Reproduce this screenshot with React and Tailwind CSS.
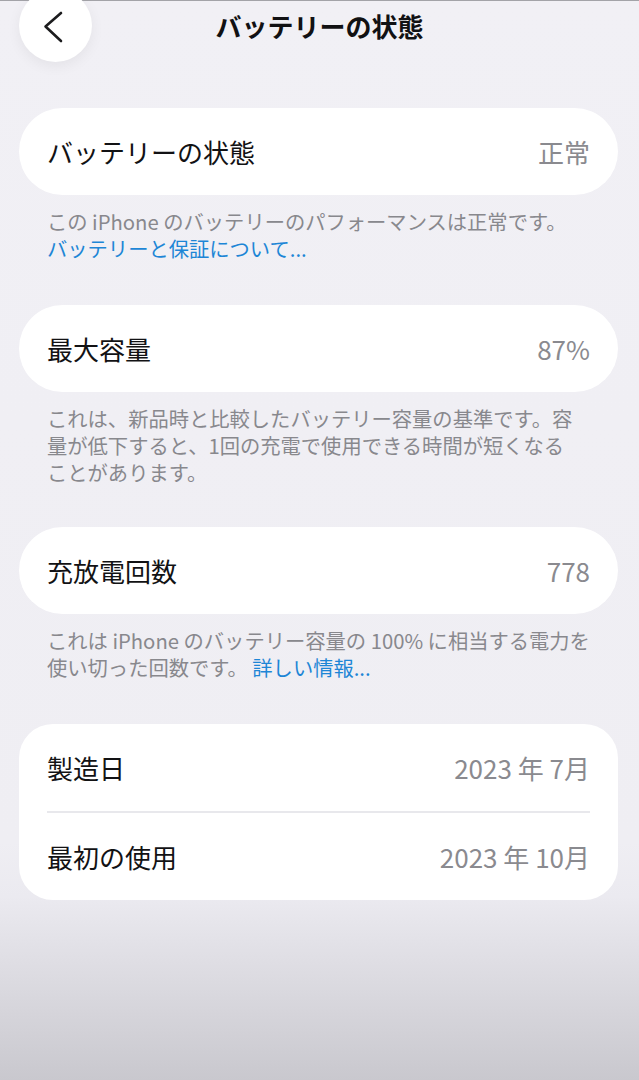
const font = "font-['Noto_Sans_CJK_JP','Noto_Sans',sans-serif]";

// single label / value pill
const Row = ({ label, value }) => (
  <div className="flex h-[87px] items-center justify-between px-[28px]">
    <span className="text-[26px] text-[#121214]">{label}</span>
    <span className="text-[26px] text-[#8a8a8f]">{value}</span>
  </div>
);

// footnote under a group, one block per line
const Note = ({ lines }) => (
  <div className="mt-[13px] px-[28px] text-[20.3px] leading-[27px] text-[#88888d]">
    {lines.map((line, i) => (
      <div key={i} className="whitespace-nowrap">
        {line}
      </div>
    ))}
  </div>
);

const Link = ({ children }) => (
  <span className="text-[#1d86d6]">{children}</span>
);

const BackChevron = () => (
  <svg width="73" height="73" viewBox="0 0 73 73" fill="none">
    <polyline
      points="42,24 26.5,37.5 42,52"
      stroke="#1c1c1e"
      strokeWidth="2.6"
      strokeLinecap="round"
      strokeLinejoin="round"
    />
  </svg>
);

export default function App() {
  return (
    <div
      className={`${font} min-h-screen w-full bg-[linear-gradient(to_bottom,#f1f0f5_0%,#efeef3_78%,#ebeaf0_83%,#c9c8ce_100%)]`}
    >
      <div className="h-px bg-[#a3a3a8]" />

      {/* header */}
      <div className="relative flex h-[48px] items-center justify-center">
        <button className="absolute left-[19px] top-[-12px] h-[73px] w-[73px] rounded-full bg-white shadow-[0_4px_14px_rgba(0,0,0,0.06)]">
          <BackChevron />
        </button>
        <h1 className="text-[26px] font-bold text-[#111113]">バッテリーの状態</h1>
      </div>

      <div className="pl-[19px] pr-[21px] pt-[59px]">
        <div className="rounded-full bg-white">
          <Row label="バッテリーの状態" value="正常" />
        </div>
        <Note
          lines={[
            "この iPhone のバッテリーのパフォーマンスは正常です。",
            <Link>バッテリーと保証について...</Link>,
          ]}
        />

        <div className="mt-[43px] rounded-full bg-white">
          <Row label="最大容量" value="87%" />
        </div>
        <Note
          lines={[
            "これは、新品時と比較したバッテリー容量の基準です。容",
            "量が低下すると、1回の充電で使用できる時間が短くなる",
            "ことがあります。",
          ]}
        />

        <div className="mt-[41px] rounded-full bg-white">
          <Row label="充放電回数" value="778" />
        </div>
        <Note
          lines={[
            "これは iPhone のバッテリー容量の 100% に相当する電力を",
            <>
              使い切った回数です。 <Link>詳しい情報...</Link>
            </>,
          ]}
        />

        <div className="mt-[43px] rounded-[34px] bg-white">
          <Row label="製造日" value="2023 年 7月" />
          <div className="mx-[28px] h-[2px] bg-[#e8e8ec]" />
          <Row label="最初の使用" value="2023 年 10月" />
        </div>
      </div>
    </div>
  );
}
